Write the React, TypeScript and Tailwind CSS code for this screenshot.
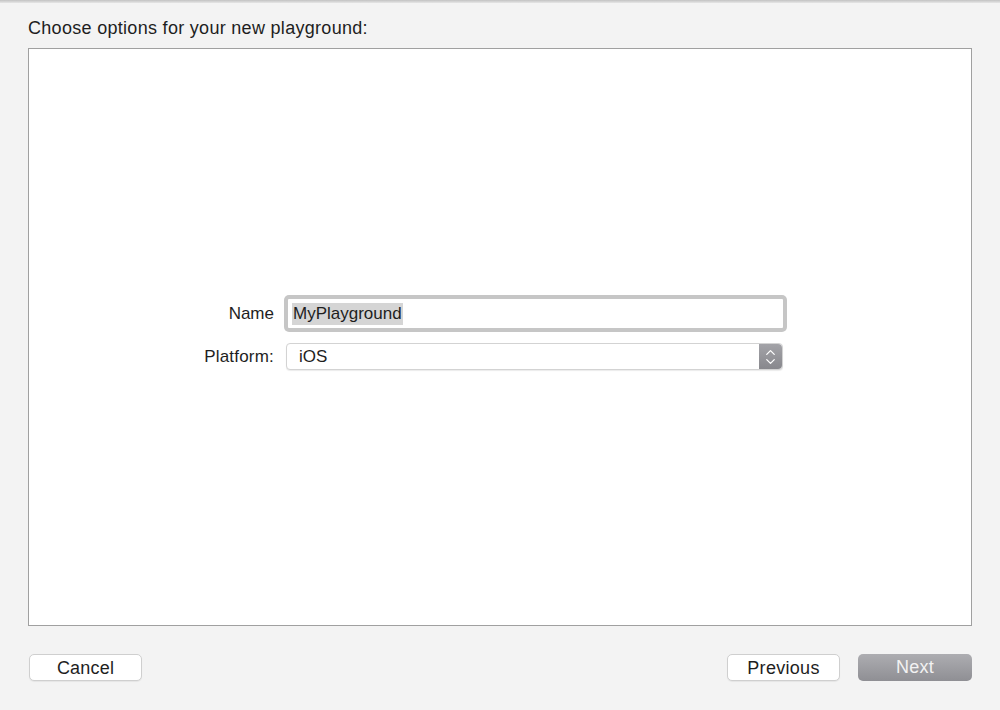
import { ChevronDown, ChevronUp } from "lucide-react"

const font = { fontFamily: '"Liberation Sans", Arial, sans-serif' }

function Stepper() {
  return (
    <div className="w-[23px] h-full flex flex-col items-center justify-center rounded-r-[4px] bg-gradient-to-b from-[#a3a3a8] to-[#88888d] text-white">
      <ChevronUp size={15} strokeWidth={2} className="-mb-[3px]" />
      <ChevronDown size={15} strokeWidth={2} className="-mt-[3px]" />
    </div>
  )
}

function App() {
  return (
    <div className="w-[1000px] h-[710px] bg-[#f3f3f3] flex flex-col text-[#1e1e1e]" style={font}>
      {/* window top edge */}
      <div className="h-[3px] bg-gradient-to-b from-[#c2c2c2] to-[#e6e6e6]" />
      <div className="px-[28px] pt-[15px] h-[45px] text-[18px] leading-[20px] tracking-[0.3px]">
        Choose options for your new playground:
      </div>

      {/* content box */}
      <div className="mx-[28px] h-[578px] bg-white border border-[#a0a0a0] flex flex-col pt-[246px]">
        <div className="flex items-center">
          <div className="w-[245px] text-right text-[17px]">Name</div>
          <div className="ml-[10px] w-[503px] h-[37px] rounded-[5px] bg-[#c6c6c6] p-[4px]">
            <div className="h-full bg-white rounded-[1px] flex items-center px-[4px]">
              <span className="bg-[#d5d5d5] text-[17px] leading-[22px] px-[1px]">MyPlayground</span>
            </div>
          </div>
        </div>
        <div className="flex items-center mt-[11px]">
          <div className="w-[245px] text-right text-[17px] tracking-[0.2px]">Platform:</div>
          <div className="ml-[12px] w-[497px] h-[27px] rounded-[4px] border border-[#d3d3d3] bg-white shadow-[0_1px_1px_rgba(0,0,0,0.08)] flex items-center justify-between">
            <span className="pl-[12px] text-[17px]">iOS</span>
            <Stepper />
          </div>
        </div>
      </div>

      {/* footer */}
      <div className="flex items-center pl-[29px] pr-[28px] pt-[28px]">
        <button className="w-[113px] h-[27px] rounded-[5px] bg-white border border-[#cfcfcf] shadow-[0_1px_1px_rgba(0,0,0,0.06)] text-[18px] tracking-[0.2px]">
          Cancel
        </button>
        <div className="flex-1" />
        <button className="w-[113px] h-[27px] rounded-[5px] bg-white border border-[#cfcfcf] shadow-[0_1px_1px_rgba(0,0,0,0.06)] text-[18px] tracking-[0.3px]">
          Previous
        </button>
        <button className="ml-[18px] w-[114px] h-[27px] rounded-[5px] bg-gradient-to-b from-[#adadb1] to-[#8f8f94] text-[#f2f2f2] text-[18px] tracking-[0.2px]">
          Next
        </button>
      </div>
    </div>
  )
}

export default App
